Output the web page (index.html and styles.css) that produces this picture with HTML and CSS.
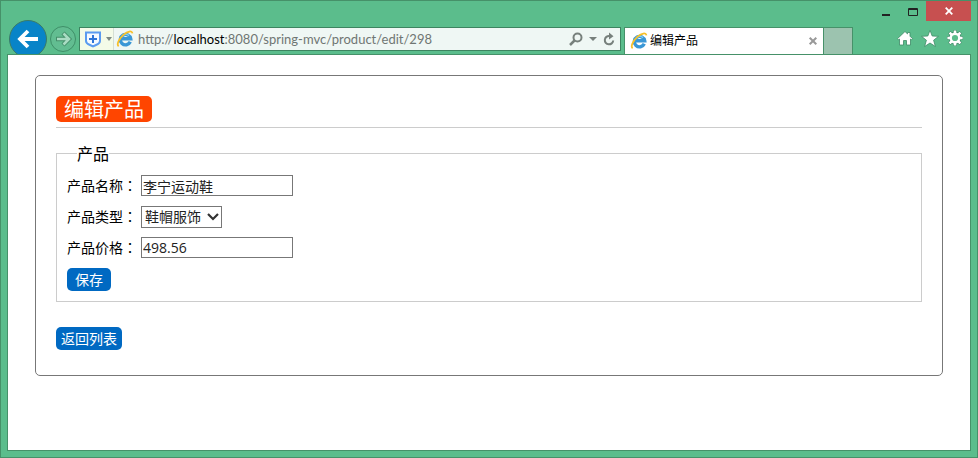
FILE: index.html
```html
<!DOCTYPE html>
<html lang="zh-CN">
<head>
<meta charset="utf-8">
<title>编辑产品</title>
<link rel="stylesheet" href="styles.css">
</head>
<body>
<svg class="defs" aria-hidden="true">
  <symbol id="ie" viewBox="0 0 18 18">
    <path d="M14.300 11.800a5.200 5.200 0 1 1 .4-3H5.200" fill="none" stroke="#3a97d6" stroke-width="3.400"/>
    <path d="M5.500 7.200a4.800 4.800 0 0 1 7.500-1.600" fill="none" stroke="#7fcdf2" stroke-width="1.400"/>
    <path d="M2.600 16.400C.4 14.600 2.600 9 7.600 4.600 11.600 1.200 16 .2 16.400 3.400" fill="none" stroke="#f7c02a" stroke-width="1.800"/>
  </symbol>
</svg>
<div class="window">
  <header class="titlebar">
    <button class="caption" aria-label="最小化"><svg width="8" height="12"><path d="M0 9h8v2H0z" fill="#222"/></svg></button>
    <button class="caption" aria-label="最大化"><svg width="10" height="12"><path d="M.5 3.500h9v7h-9zM0 4.500h10" fill="none" stroke="#222" stroke-width="1"/></svg></button>
    <button class="caption close" aria-label="关闭"><svg width="8" height="8"><path d="M.7.7l6.600 6.600M7.300.7L.7 7.300" stroke="#fff" stroke-width="1.800"/></svg></button>
  </header>
  <nav class="toolbar">
    <button class="back" aria-label="后退"><svg width="38" height="33"><circle cx="19" cy="18" r="18.500" fill="#0884c8" stroke="#3a7a68"/><path d="M29 18H11M19 10l-8 8 8 8" fill="none" stroke="#fff" stroke-width="3.800"/></svg></button>
    <button class="forward" aria-label="前进"><svg width="26" height="33"><circle cx="13" cy="18" r="12.500" fill="#62bd91" stroke="#3f8f68"/><path d="M6 18h12M13 12l6 6-6 6" fill="none" stroke="#438e69" stroke-width="4.400"/><path d="M7 18h11M13.500 12.500l5.500 5.500-5.500 5.500" fill="none" stroke="#a9dcc3" stroke-width="2.600"/></svg></button>
    <div class="address">
      <button class="shield" aria-label="安全"><svg width="26" height="20"><path d="M6 3.500h14v8.500q0 2.500-4 4l-3 1.500-3-1.500q-4-1.500-4-4z" fill="#f5faff" stroke="#5a9bf0" stroke-width="2"/><path d="M13 6v8M9 10h8" stroke="#2e75d8" stroke-width="2"/></svg><svg width="6" height="4"><path d="M0 0h6L3 4z" fill="#7d8a84"/></svg></button>
      <svg class="ie" width="18" height="18"><use href="#ie"/></svg>
      <span class="url">http://<b>localhost</b>:8080/spring-mvc/product/edit/298</span>
      <button class="tool" aria-label="搜索"><svg width="14" height="14"><circle cx="8.500" cy="5.500" r="4" fill="none" stroke="#77807c" stroke-width="2"/><path d="M5.500 8.500L1 13" stroke="#77807c" stroke-width="2.500"/></svg></button>
      <button class="tool" aria-label="更多"><svg width="8" height="4"><path d="M0 0h8L4 4z" fill="#77807c"/></svg></button>
      <button class="tool" aria-label="刷新"><svg width="12" height="14"><path d="M6.500 4a4.200 4.200 0 1 0 3.700 4.500" fill="none" stroke="#77807c" stroke-width="2"/><path d="M6 .5L10.500 4.200 6 7.500z" fill="#77807c"/></svg></button>
    </div>
    <div class="tab">
      <svg class="ie" width="18" height="18"><use href="#ie"/></svg>
      <span class="tab-title">编辑产品</span>
      <button class="tab-close" aria-label="关闭标签页"><svg width="8" height="8"><path d="M.7.7l6.600 6.600M7.300.7L.7 7.300" stroke="#999" stroke-width="2"/></svg></button>
    </div>
    <button class="new-tab" aria-label="新建标签页"></button>
    <div class="actions">
      <button aria-label="主页"><svg width="16" height="16"><path d="M8 1.500l2.500 2.400V2.500h2.500v3.700l2.500 2.500-1 1.100-1-.8V15H9.500v-4.500h-3V15h-4V9l-1 .8-1-1.100z" fill="#fff" stroke="#3f8a67" stroke-width=".8"/></svg></button>
      <button aria-label="收藏夹"><svg width="18" height="17"><path d="M9 .3l2.200 5.700 6.300.3-4.900 3.900 1.800 6.300L9 13l-5.400 3.500 1.800-6.300L.5 6.300l6.300-.3z" fill="#fff" stroke="#3f8a67" stroke-width=".8"/></svg></button>
      <button aria-label="工具"><svg width="16" height="16" fill="none"><path d="M8 0v16M0 8h16M2.300 2.300l11.400 11.400M13.700 2.300L2.300 13.700" stroke="#3f8a67" stroke-width="3.600"/><circle cx="8" cy="8" r="4.600" stroke="#3f8a67" stroke-width="3.600"/><path d="M8 .4v3M8 12.600v3M.4 8h3M12.600 8h3M2.600 2.600l2 2M11.400 11.400l2 2M13.400 2.600l-2 2M4.600 11.400l-2 2" stroke="#fff" stroke-width="2.600"/><circle cx="8" cy="8" r="4.300" fill="#5bbd8c" stroke="#fff" stroke-width="2.400"/></svg></button>
    </div>
  </nav>
  <main class="page">
    <section class="card">
      <div class="heading"><h1>编辑产品</h1></div>
      <form>
        <fieldset>
          <legend>产品</legend>
          <div class="row"><label for="name">产品名称<span class="colon" lang="zh-TW">：</span></label><input id="name" type="text" value="李宁运动鞋"></div>
          <div class="row"><label for="type">产品类型<span class="colon" lang="zh-TW">：</span></label><span class="picker"><select id="type"><option>鞋帽服饰</option></select><svg class="chevron" width="12" height="8"><path d="M1 1l5 5 5-5" fill="none" stroke="#333" stroke-width="2.200"/></svg></span></div>
          <div class="row"><label for="price">产品价格<span class="colon" lang="zh-TW">：</span></label><input id="price" type="text" value="498.56"></div>
          <button class="btn save" type="submit">保存</button>
        </fieldset>
      </form>
      <a class="btn return" href="#">返回列表</a>
    </section>
  </main>
</div>
</body>
</html>
```
FILE: styles.css
```css
* { box-sizing: border-box; }
body {
  margin: 0;
  font: 14px/20px "Open Sans", "Noto Sans CJK SC", sans-serif;
  color: #000;
}
button {
  margin: 0;
  padding: 0;
  border: 0;
  background: none;
  font: inherit;
  color: inherit;
}
svg { display: block; flex: none; }
.defs { position: absolute; width: 0; height: 0; }
.window {
  display: flex;
  flex-direction: column;
  min-height: 100vh;
  padding: 0 6px 6px;
  background: #5bbd8c;
  border: 1px solid #469169;
}
.titlebar {
  display: flex;
  justify-content: flex-end;
  height: 20px;
}
.caption {
  display: flex;
  align-items: center;
  justify-content: center;
  width: 27px;
}
.close { width: 45px; background: #c75050; }
.toolbar {
  display: flex;
  height: 33px;
  padding-left: 2px;
}
.toolbar svg { overflow: visible; }
.forward { margin: 0 3px; }
.address {
  display: flex;
  flex: 1;
  align-items: center;
  height: 24px;
  margin-top: 6px;
  padding-right: 5px;
  background: #eff7f4;
  border: 1px solid #3d8460;
}
.shield {
  display: flex;
  align-items: center;
  width: 34px;
  height: 22px;
  background: #f4fbe8;
  border-right: 1px solid #d5dfd4;
}
.address .ie { margin: 0 4px 0 2px; }
.url {
  flex: 1;
  font-family: Lato, sans-serif;
  font-size: 13px;
  color: #6f7673;
  white-space: nowrap;
}
.url b { font-weight: 400; color: #000; }
.tool { margin-left: 6px; }
.tab {
  display: flex;
  align-items: center;
  width: 200px;
  height: 27px;
  margin: 6px 0 0 3px;
  padding: 0 6px 0 5px;
  background: #fff;
  border: 1px solid #469169;
  border-bottom: 0;
}
.tab-title { flex: 1; margin-left: 2px; font-size: 12px; }
.new-tab {
  width: 29px;
  height: 27px;
  margin-top: 6px;
  background: #9cc3af;
  border: solid #469169;
  border-width: 1px 1px 0 0;
}
.actions {
  display: flex;
  align-items: center;
  gap: 8px;
  height: 34px;
  margin: 0 8px 0 44px;
}
.page {
  position: relative;
  flex: 1;
  padding: 20px 27px;
  background: #fff;
  border: 1px solid #469169;
}
.card {
  padding: 20px 20px 25px;
  border: 1px solid #777;
  border-radius: 5px;
}
.heading { padding-bottom: 5px; border-bottom: 1px solid #ccc; }
h1 {
  width: fit-content;
  margin: 0;
  padding: 2px 8px 0;
  font-size: 20px;
  font-weight: 400;
  line-height: 24px;
  color: #fff;
  background: #ff4500;
  border-radius: 5px;
}
fieldset {
  min-width: 0;
  margin: 14px 0 25px;
  padding: 0 10px 10px;
  border: 1px solid #ccc;
}
legend { margin-left: 10px; padding: 2px 0 0; font-size: 16px; line-height: 20px; }
.row {
  display: flex;
  align-items: center;
  gap: 4px;
  height: 21px;
  margin-bottom: 10px;
}
legend + .row { margin-top: 11px; }
.colon { font-family: "Noto Sans CJK TC", sans-serif; }
input, select {
  margin: 0;
  font: inherit;
  color: #222;
  background: #fff;
  border: 1px solid #777;
  border-radius: 0;
}
input { width: 152px; height: 21px; padding: 0 1px; }
.picker { position: relative; }
select {
  display: block;
  width: 81px;
  height: 22px;
  padding: 0 0 0 3px;
  appearance: none;
}
.chevron { position: absolute; top: 7px; right: 3px; pointer-events: none; }
.btn {
  display: block;
  width: fit-content;
  line-height: 23px;
  color: #fff;
  text-decoration: none;
  background: #0069c2;
  border-radius: 5px;
}
.save { padding: 0 8px; }
.return { padding: 0 5px; }
```
